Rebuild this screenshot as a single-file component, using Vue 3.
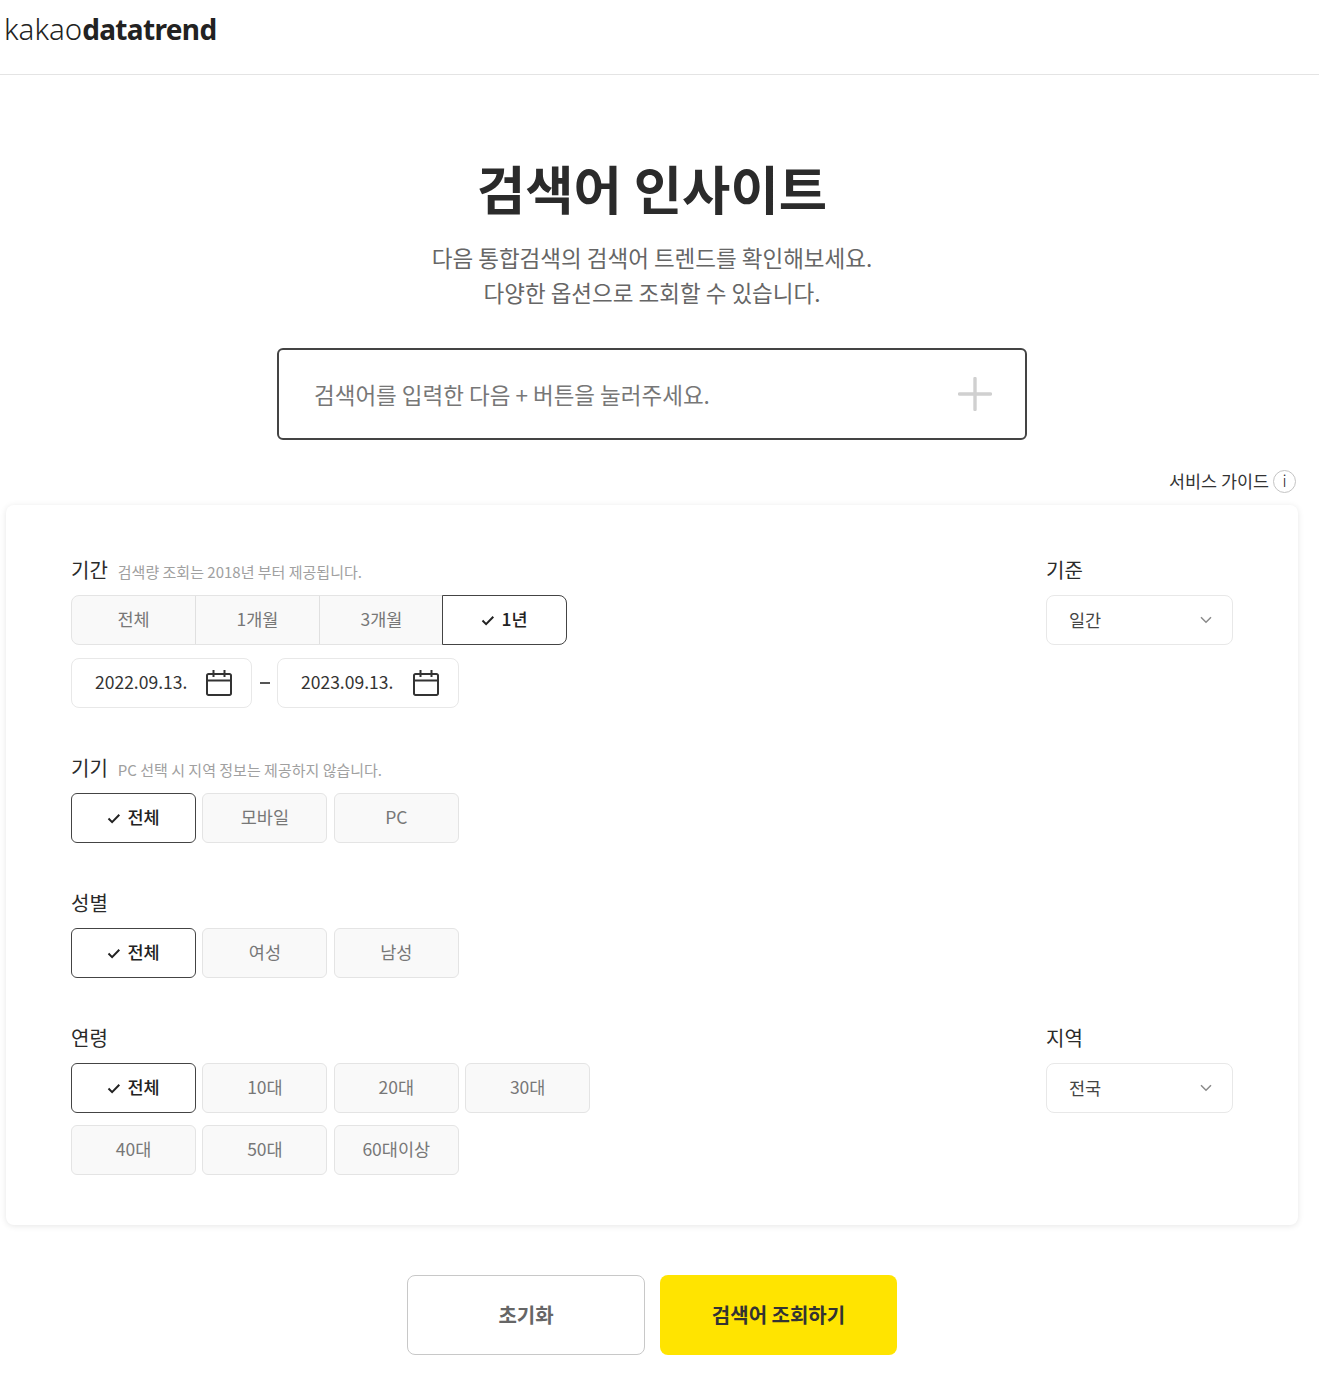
<template>
  <div class="page">
    <header class="top">
      <span class="logo"><span class="logo-light">kakao</span><b>datatrend</b></span>
    </header>

    <main class="content">
      <h1 class="title">검색어 인사이트</h1>
      <p class="desc">다음 통합검색의 검색어 트렌드를 확인해보세요.<br />다양한 옵션으로 조회할 수 있습니다.</p>

      <div class="search">
        <span class="placeholder">검색어를 입력한 다음 + 버튼을 눌러주세요.</span>
        <svg class="plus" width="34" height="34" viewBox="0 0 34 34">
          <path d="M17 1.500v31M1.500 17h31" stroke="#d0d0d0" stroke-width="3.400" stroke-linecap="round" fill="none" />
        </svg>
      </div>

      <div class="guide">
        <span>서비스 가이드</span>
        <span class="guide-i"><span>i</span></span>
      </div>

      <section class="card">
        <div class="row">
          <div>
            <div class="head"><span class="label">기간</span><span class="note">검색량 조회는 2018년 부터 제공됩니다.</span></div>
            <div class="segment">
              <button v-for="p in periods" :key="p" class="seg" :class="{ on: p === period }">
                <svg v-if="p === period" class="check" width="14" height="11" viewBox="0 0 14 11"><path d="M1.500 5.500l3.600 3.600 7.200-7.400" stroke="#222" stroke-width="2" fill="none" /></svg>{{ p }}
              </button>
            </div>
            <div class="dates">
              <div v-for="(d, i) in dates" :key="d" class="date-wrap">
                <span v-if="i" class="dash"></span>
                <div class="date">
                  <span>{{ d }}</span>
                  <svg width="26" height="26" viewBox="0 0 26 26">
                    <path d="M1 5.500a1.500 1.500 0 0 1 1.500-1.500h21a1.500 1.500 0 0 1 1.500 1.500v18a1.500 1.500 0 0 1-1.500 1.500h-21a1.500 1.500 0 0 1-1.500-1.500zM1 10.500h24M7.500 0v7M18.500 0v7" stroke="#333" stroke-width="2" fill="none" />
                  </svg>
                </div>
              </div>
            </div>
          </div>
          <div class="side">
            <div class="head"><span class="label">기준</span></div>
            <div class="select">
              <span>일간</span>
              <svg width="12" height="8" viewBox="0 0 12 8"><path d="M1 1.200l5 5 5-5" stroke="#8a8a8a" stroke-width="1.500" fill="none" /></svg>
            </div>
          </div>
        </div>

        <div class="row">
          <div>
            <div class="head"><span class="label">기기</span><span class="note">PC 선택 시 지역 정보는 제공하지 않습니다.</span></div>
            <div class="chips">
              <button v-for="(c, i) in devices" :key="c" class="chip" :class="{ on: i === 0 }">
                <svg v-if="i === 0" class="check" width="14" height="11" viewBox="0 0 14 11"><path d="M1.500 5.500l3.600 3.600 7.200-7.400" stroke="#222" stroke-width="2" fill="none" /></svg>{{ c }}
              </button>
            </div>
          </div>
        </div>

        <div class="row">
          <div>
            <div class="head"><span class="label">성별</span></div>
            <div class="chips">
              <button v-for="(c, i) in genders" :key="c" class="chip" :class="{ on: i === 0 }">
                <svg v-if="i === 0" class="check" width="14" height="11" viewBox="0 0 14 11"><path d="M1.500 5.500l3.600 3.600 7.200-7.400" stroke="#222" stroke-width="2" fill="none" /></svg>{{ c }}
              </button>
            </div>
          </div>
        </div>

        <div class="row">
          <div>
            <div class="head"><span class="label">연령</span></div>
            <div class="chips ages">
              <button v-for="(c, i) in ages" :key="c" class="chip" :class="{ on: i === 0 }">
                <svg v-if="i === 0" class="check" width="14" height="11" viewBox="0 0 14 11"><path d="M1.500 5.500l3.600 3.600 7.200-7.400" stroke="#222" stroke-width="2" fill="none" /></svg>{{ c }}
              </button>
            </div>
          </div>
          <div class="side">
            <div class="head"><span class="label">지역</span></div>
            <div class="select">
              <span>전국</span>
              <svg width="12" height="8" viewBox="0 0 12 8"><path d="M1 1.200l5 5 5-5" stroke="#8a8a8a" stroke-width="1.500" fill="none" /></svg>
            </div>
          </div>
        </div>
      </section>

      <div class="actions">
        <button class="btn reset">초기화</button>
        <button class="btn submit">검색어 조회하기</button>
      </div>
    </main>
  </div>
</template>

<script setup>
const period = "1년";
const periods = ["전체", "1개월", "3개월", "1년"];
const dates = ["2022.09.13.", "2023.09.13."];
const devices = ["전체", "모바일", "PC"];
const genders = ["전체", "여성", "남성"];
const ages = ["전체", "10대", "20대", "30대", "40대", "50대", "60대이상"];
</script>

<style>
html, body {
  margin: 0;
  background: #fff;
}
</style>

<style scoped>
.page {
  font-family: "Noto Sans CJK KR", "Noto Sans", sans-serif;
  color: #333;
  height: 1385px;
  overflow: hidden;
}

.top {
  height: 74px;
  border-bottom: 1px solid #e4e4e4;
  padding-left: 4px;
}

.logo {
  display: block;
  font-family: "Noto Sans", sans-serif;
  line-height: 58px;
  color: #222;
}

.logo-light {
  font-size: 29.500px;
  font-weight: 300;
}

.logo b {
  font-size: 28px;
  font-weight: 700;
  letter-spacing: -0.650px;
}

.content {
  width: 1304px;
}

.title {
  margin: 0;
  padding-top: 72px;
  text-align: center;
  font-size: 52.500px;
  line-height: 80px;
  font-weight: 700;
  color: #2b2b2b;
}

.desc {
  margin: 13px 0 0;
  text-align: center;
  font-size: 22.500px;
  line-height: 35px;
  font-weight: 400;
  color: #666;
}

.search {
  box-sizing: border-box;
  width: 750px;
  height: 92px;
  margin: 38px auto 0;
  padding: 0 33px 0 35px;
  border: 2px solid #444;
  border-radius: 6px;
  display: flex;
  align-items: center;
  justify-content: space-between;
}

.placeholder {
  font-size: 22.500px;
  color: #777;
}

.guide {
  height: 25px;
  margin-top: 29px;
  padding-right: 8px;
  display: flex;
  justify-content: flex-end;
  align-items: center;
  gap: 4px;
  font-size: 17.400px;
  color: #333;
}

.guide > span:first-child {
  padding-bottom: 2px;
}

.guide-i {
  box-sizing: border-box;
  width: 23px;
  height: 23px;
  border: 1px solid #c4c4c4;
  border-radius: 50%;
  display: flex;
  align-items: center;
  justify-content: center;
  font-size: 16px;
  font-weight: 300;
  color: #222;
}

.guide-i span {
  padding-bottom: 3px;
}

.card {
  box-sizing: border-box;
  width: 1292px;
  margin: 11px 0 0 6px;
  padding: 50px 65px;
  border-radius: 8px;
  background: #fff;
  box-shadow: 0 1px 6px rgba(0, 0, 0, 0.1);
  display: flex;
  flex-direction: column;
  gap: 45px;
}

.row {
  display: flex;
  justify-content: space-between;
}

.head {
  height: 30px;
  margin-bottom: 10px;
  display: flex;
  align-items: center;
  gap: 10px;
}

.label {
  font-size: 20px;
  font-weight: 400;
  line-height: 28px;
  color: #2a2a2a;
}

.note {
  font-size: 15px;
  color: #a0a0a0;
  padding-top: 3px;
}

.segment {
  box-sizing: border-box;
  width: 496px;
  height: 50px;
  display: grid;
  grid-template-columns: 123px 124px 124px 1fr;
  border: 1px solid #e4e4e4;
  border-radius: 8px;
  background: #f9f9f9;
}

.seg {
  margin: 0;
  padding: 0 0 4px;
  border: 0;
  border-left: 1px solid #e0e0e0;
  background: none;
  font: inherit;
  font-size: 17.500px;
  color: #777;
}

.seg:first-child {
  border-left: 0;
}

.seg.on {
  margin: -1px;
  border: 1px solid #444;
  border-radius: 0 8px 8px 0;
  background: #fff;
  color: #222;
  font-weight: 500;
}

.check {
  margin-right: 6px;
}

.dates {
  display: flex;
  margin-top: 13px;
}

.date-wrap {
  display: flex;
  align-items: center;
}

.date-wrap + .date-wrap .date {
  width: 182px;
}

.dash {
  width: 10px;
  height: 2px;
  margin: 0 7px 0 8px;
  background: #555;
}

.date {
  box-sizing: border-box;
  width: 181px;
  height: 50px;
  padding: 0 19px 0 23px;
  border: 1px solid #e8e8e8;
  border-radius: 8px;
  display: flex;
  align-items: center;
  justify-content: space-between;
  font-size: 17.500px;
  color: #333;
}

.date > span {
  padding-bottom: 4px;
}

.chips {
  display: grid;
  grid-template-columns: repeat(4, 125px);
  gap: 12px 6.400px;
}

.chips:not(.ages) {
  grid-template-columns: repeat(3, 125px);
}

.chip {
  box-sizing: border-box;
  height: 50px;
  margin: 0;
  padding: 0 0 4px;
  border: 1px solid #e4e4e4;
  border-radius: 6px;
  background: #f9f9f9;
  font: inherit;
  font-size: 17.500px;
  color: #777;
}

.chip.on {
  border-color: #444;
  background: #fff;
  color: #222;
  font-weight: 500;
}

.side {
  width: 187px;
}

.select {
  box-sizing: border-box;
  height: 50px;
  padding: 0 20px 0 22px;
  border: 1px solid #e8e8e8;
  border-radius: 8px;
  display: flex;
  align-items: center;
  justify-content: space-between;
  font-size: 17.500px;
  color: #444;
}

.select > span {
  padding-bottom: 1px;
}

.actions {
  margin-top: 50px;
  padding-left: 407px;
  display: flex;
  gap: 15px;
}

.btn {
  box-sizing: border-box;
  width: 238px;
  height: 80px;
  padding: 0 0 2px;
  border-radius: 8px;
  font: inherit;
  font-size: 20px;
  font-weight: 700;
}

.reset {
  border: 1px solid #c8c8c8;
  background: #fff;
  color: #666;
}

.submit {
  width: 237px;
  border: 0;
  background: #ffe400;
  color: #333;
}
</style>
